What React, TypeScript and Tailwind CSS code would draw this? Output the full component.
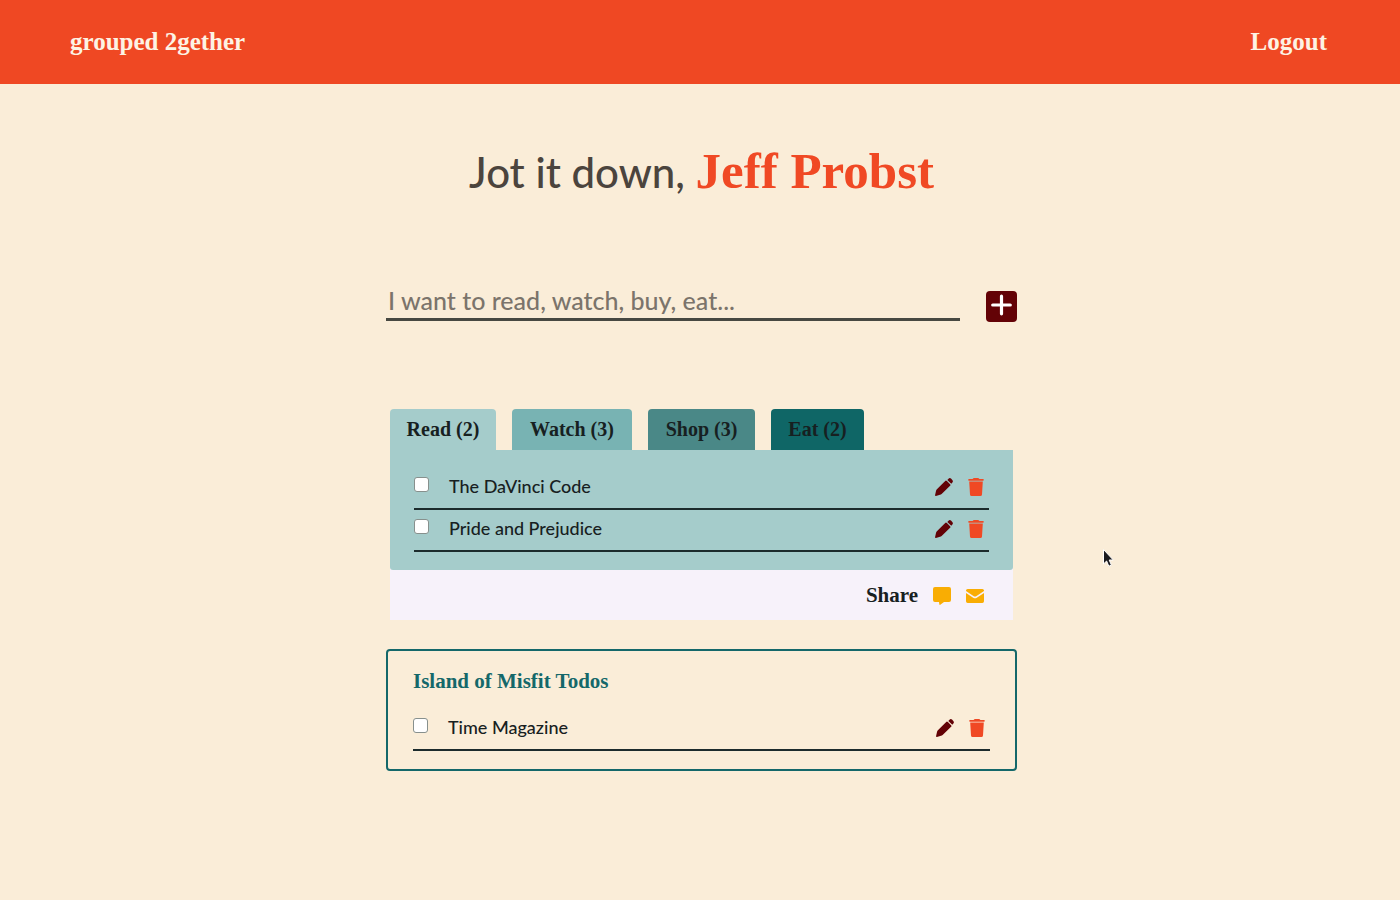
import { useState } from "react";

const serif = "font-['Liberation_Serif',serif]";

function PencilIcon() {
  return (
    <svg className="h-[18px] w-[18px]" viewBox="0 0 18 18" fill="#630206" aria-hidden="true">
      <path d="M0.1 17.1 1 12.9Q1.2 12 1.9 11.2L10.2 2.9Q11 2.1 11.9 3L15.1 6.2Q15.9 7 15.1 7.8L6.6 15.9Q5.9 16.6 5 16.8L0.9 17.9Q-0.1 18 0.1 17.1Z" />
      <path d="M12.3 1.9 13.5 0.7Q14.8-0.4 16 0.6L17.3 1.9Q18.5 3.2 17.4 4.5L16.3 5.8Z" />
    </svg>
  );
}

function TrashIcon() {
  return (
    <svg className="h-[18px] w-4" viewBox="0 0 16 18" fill="#f04924" aria-hidden="true">
      <path d="M5 0.6Q5.3 0 6 0H10Q10.7 0 11 0.6L11.3 1H15Q15.8 1 15.8 1.8T15 2.7H1Q0.2 2.7 0.2 1.9T1 1H4.7Z" />
      <path d="M1.2 3.6H14.8L14 16.4Q13.9 18 12.4 18H3.6Q2.1 18 2 16.4Z" />
    </svg>
  );
}

function ChatIcon() {
  return (
    <svg className="h-[18px] w-[18px]" viewBox="0 0 18 18" fill="#f9ad03" aria-hidden="true">
      <path d="M2 0H16Q18 0 18 2V13Q18 15 16 15H11L7.6 17.6Q6.5 18.4 6.3 17L6 15H2Q0 15 0 13V2Q0 0 2 0Z" />
    </svg>
  );
}

function MailIcon() {
  return (
    <svg className="h-[14px] w-[18px]" viewBox="0 0 18 14" fill="#f9ad03" aria-hidden="true">
      <path d="M1.7 0H16.3Q18 0 18 1.6V2.1L10.2 7.2Q9 8 7.8 7.2L0 2.1V1.6Q0 0 1.7 0Z" />
      <path d="M0 4.1 7.2 8.7Q9 9.9 10.8 8.7L18 4.1V12.3Q18 14 16.3 14H1.7Q0 14 0 12.3Z" />
    </svg>
  );
}

function PlusIcon() {
  return (
    <svg className="h-[31px] w-[31px]" viewBox="0 0 31 31" aria-hidden="true">
      <path d="M15.5 5.2V22.8M6.7 14H24.3" stroke="#fff" strokeWidth="3.2" strokeLinecap="round" />
    </svg>
  );
}

function TodoRow({ text }: { text: string }) {
  return (
    <li className="flex h-[42px] items-center border-b-2 border-[#1c2b2c] pb-[2px]">
      <label className="flex flex-1 items-center gap-5 pb-[2px] text-[18px] leading-6 font-medium">
        <input
          type="checkbox"
          className="mb-1 h-[15px] w-[15px] appearance-none rounded-[3px] border border-[#87908d] bg-white checked:bg-[#0d6868]"
        />
        <span>{text}</span>
      </label>
      <div className="flex items-center gap-[15px] pr-[5px]">
        <button type="button" aria-label={`Edit ${text}`}>
          <PencilIcon />
        </button>
        <button type="button" aria-label={`Delete ${text}`}>
          <TrashIcon />
        </button>
      </div>
    </li>
  );
}

const lists = [
  { name: "Read", count: 2, style: "w-[106px] bg-[#a5cccb]", items: ["The DaVinci Code", "Pride and Prejudice"] },
  { name: "Watch", count: 3, style: "w-[120px] bg-[#78b3b3]", items: [] },
  { name: "Shop", count: 3, style: "w-[107px] bg-[#4a8887]", items: [] },
  { name: "Eat", count: 2, style: "w-[93px] bg-[#0f6666]", items: [] },
];

export default function App() {
  const [active, setActive] = useState(0);
  return (
    <div className="min-h-screen bg-[#faedd8] font-[Lato,sans-serif] text-[#172021]">
      <header
        className={`flex h-[84px] items-center justify-between bg-[#ef4823] pr-[73px] pl-[70px] text-[25px] font-bold text-[#fdf3e4] ${serif}`}
      >
        <a href="#home">grouped 2gether</a>
        <a href="#logout">Logout</a>
      </header>

      <main className="flex flex-col items-center pt-[55px] pl-[3px]">
        <h1 className="text-[42px] leading-[64px] font-medium text-[#4b443d]">
          Jot it down, <span className={`text-[51px] font-bold text-[#f04924] ${serif}`}>Jeff Probst</span>
        </h1>

        <div className="w-full max-w-[631px]">
          <form className="mt-[78px] flex items-end gap-[26px]" onSubmit={(e) => e.preventDefault()}>
            <input
              type="text"
              aria-label="New todo"
              placeholder="I want to read, watch, buy, eat..."
              className="mb-px h-[39px] min-w-0 flex-1 border-b-[3px] border-[#474841] bg-transparent px-[2px] text-[25px] font-medium outline-none placeholder:text-[#7b746b]"
            />
            <button type="submit" aria-label="Add todo" className="rounded bg-[#630206]">
              <PlusIcon />
            </button>
          </form>

          <section className="mx-1 mt-[87px]">
            <div role="tablist" className="flex gap-4">
              {lists.map((list, i) => (
                <button
                  key={list.name}
                  type="button"
                  role="tab"
                  aria-selected={i === active}
                  onClick={() => setActive(i)}
                  className={`h-[41px] rounded-t pb-px text-[20px] font-bold whitespace-nowrap ${serif} ${list.style}`}
                >
                  {list.name} ({list.count})
                </button>
              ))}
            </div>
            <div className="bg-[#f7f2fa]">
              <ul className="rounded-b-[3px] bg-[#a5cccb] px-6 pt-[18px] pb-[18px]">
                {lists[active].items.map((item) => (
                  <TodoRow key={item} text={item} />
                ))}
              </ul>
              <div className="flex h-[50px] items-center justify-end gap-[15px] pt-[2px] pr-[29px]">
                <span className={`text-[21px] font-bold ${serif}`}>Share</span>
                <button type="button" aria-label="Share by message">
                  <ChatIcon />
                </button>
                <button type="button" aria-label="Share by email">
                  <MailIcon />
                </button>
              </div>
            </div>
          </section>

          <section className="mt-[29px] rounded border-2 border-[#14686a] px-[25px] pt-4 pb-[18px]">
            <h2 className={`text-[21px] leading-7 font-bold text-[#14686a] ${serif}`}>Island of Misfit Todos</h2>
            <ul className="mt-[14px]">
              <TodoRow text="Time Magazine" />
            </ul>
          </section>
        </div>
      </main>

      <svg className="pointer-events-none absolute top-[548px] left-[1102px] h-5 w-3" viewBox="0 0 12 20" aria-hidden="true">
        <path
          d="M1.5 1.5V16L4.6 13 6.8 18.2 9.4 17.1 7.2 12H11.3Z"
          fill="#1b1b1f"
          stroke="#fff"
          strokeWidth="1"
          strokeLinejoin="round"
        />
      </svg>
    </div>
  );
}
